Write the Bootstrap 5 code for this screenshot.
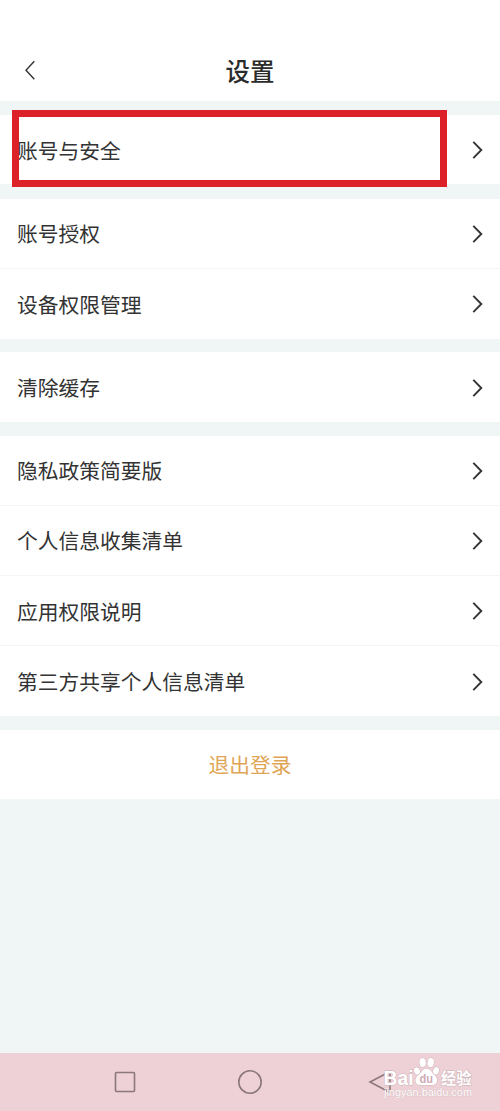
<!DOCTYPE html>
<html lang="zh-CN">
<head>
<meta charset="utf-8">
<meta name="viewport" content="width=device-width, initial-scale=1">
<title>设置</title>
<link href="https://cdn.jsdelivr.net/npm/bootstrap@5.3.0/dist/css/bootstrap.min.css" rel="stylesheet">
<style>
body{background:#f0f5f6;color:#333;font-family:"Noto Sans CJK SC",sans-serif;font-size:20.75px;line-height:30px}
.topbar{height:101px;padding:41px 22px 0}
.topbar h1{font-size:24.5px;line-height:58px;font-weight:500;color:#2b2b2b}
.groups{gap:13.4px;padding-top:14px}
.list-group{--bs-list-group-bg:#fff;--bs-list-group-color:#333;--bs-list-group-border-color:#f3f4f4}
.entry{height:70.15px;padding:0 16px 0 17px}
.entry svg{margin-top:1px}
.marker{left:12px;top:-5px;width:435px;height:77px;border:7px solid #dd2129;z-index:2}
.logout{height:69.500px;padding-bottom:1px;color:#dfa556}
.sysbar{height:58px;background:#edd1d6}
.sysbar svg{display:block}
</style>
</head>
<body>
<div class="d-flex flex-column vh-100 overflow-hidden">
<header class="topbar bg-white d-flex align-items-center justify-content-between flex-shrink-0">
<svg width="16" height="24" viewBox="0 0 16 24" fill="none" stroke="#333" stroke-width="1.4"><path d="M12.3 2.300 4 11.300l8.300 9"/></svg>
<h1 class="m-0">设置</h1>
<span style="width:16px"></span>
</header>
<main class="groups d-flex flex-column flex-grow-1">
<section class="list-group list-group-flush position-relative">
<a class="entry list-group-item d-flex align-items-center justify-content-between"><span>账号与安全</span><svg width="14" height="20"><use href="#chev"/></svg></a>
<div class="marker position-absolute"></div>
</section>
<section class="list-group list-group-flush">
<a class="entry list-group-item d-flex align-items-center justify-content-between"><span>账号授权</span><svg width="14" height="20"><use href="#chev"/></svg></a>
<a class="entry list-group-item d-flex align-items-center justify-content-between"><span>设备权限管理</span><svg width="14" height="20"><use href="#chev"/></svg></a>
</section>
<section class="list-group list-group-flush">
<a class="entry list-group-item d-flex align-items-center justify-content-between"><span>清除缓存</span><svg width="14" height="20"><use href="#chev"/></svg></a>
</section>
<section class="list-group list-group-flush">
<a class="entry list-group-item d-flex align-items-center justify-content-between"><span>隐私政策简要版</span><svg width="14" height="20"><use href="#chev"/></svg></a>
<a class="entry list-group-item d-flex align-items-center justify-content-between"><span>个人信息收集清单</span><svg width="14" height="20"><use href="#chev"/></svg></a>
<a class="entry list-group-item d-flex align-items-center justify-content-between"><span>应用权限说明</span><svg width="14" height="20"><use href="#chev"/></svg></a>
<a class="entry list-group-item d-flex align-items-center justify-content-between"><span>第三方共享个人信息清单</span><svg width="14" height="20"><use href="#chev"/></svg></a>
</section>
<a class="logout bg-white d-flex align-items-center justify-content-center text-decoration-none">退出登录</a>
</main>
<footer class="sysbar flex-shrink-0">
<svg width="500" height="58" viewBox="0 0 500 58">
<defs><symbol id="chev" viewBox="0 0 14 20"><path d="M3.300 1.900 11.300 10l-8 8.100" fill="none" stroke="#333" stroke-width="1.900"/></symbol></defs>
<g fill="none" stroke="#8b777c" stroke-width="1.600">
<rect x="115.500" y="19.500" width="19" height="19" rx="1"/>
<circle cx="250" cy="29" r="11.200"/>
<path d="M390 18.500v21L370 29Z"/>
</g>
<g fill="#fff" stroke="#cdb2b8" stroke-width="1" style="paint-order:stroke">
<text x="383.500" y="32" font-family="Liberation Sans, sans-serif" font-size="20" font-weight="700" textLength="30" lengthAdjust="spacingAndGlyphs">Bai</text>
<ellipse cx="417" cy="18" rx="2.900" ry="3.700" transform="rotate(-18 417 18)"/>
<ellipse cx="422.600" cy="9.500" rx="3.200" ry="4.500" transform="rotate(-5 422.600 9.500)"/>
<ellipse cx="430.700" cy="9.500" rx="3.200" ry="4.500" transform="rotate(8 430.700 9.500)"/>
<ellipse cx="436" cy="17.800" rx="2.900" ry="3.700" transform="rotate(18 436 17.800)"/>
<path d="M426.500 15.500c4 0 5 4 8 6.500 4 3.500 3.500 10-2.500 10h-11.500c-6 0-6.500-6.500-2.500-9.500 3.500-2.500 4.500-7 8.500-7Z"/>
<text x="441" y="31" font-family="Noto Sans CJK SC, sans-serif" font-size="15.500" font-weight="700" textLength="30.500" lengthAdjust="spacingAndGlyphs">经验</text>
<text x="384" y="42.500" stroke-width=".5" font-family="Liberation Sans, sans-serif" font-size="10.500" textLength="88" lengthAdjust="spacingAndGlyphs">jingyan.baidu.com</text>
</g>
<text x="419.500" y="30" font-family="Liberation Sans, sans-serif" font-size="12.500" font-weight="700" fill="#cfacb4" textLength="13.500" lengthAdjust="spacingAndGlyphs">du</text>
</svg>
</footer>
</div>
<script src="https://cdn.jsdelivr.net/npm/bootstrap@5.3.0/dist/js/bootstrap.bundle.min.js"></script>
</body>
</html>
